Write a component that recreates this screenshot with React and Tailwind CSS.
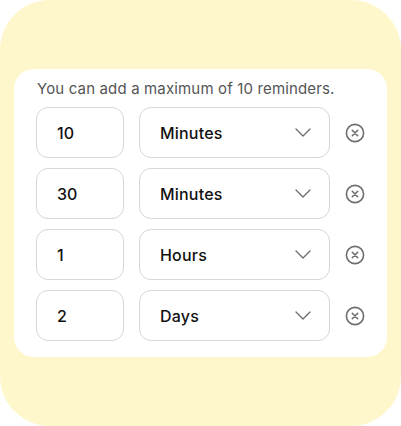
import React from "react";

const reminders = [
  { amount: "10", unit: "Minutes" },
  { amount: "30", unit: "Minutes" },
  { amount: "1", unit: "Hours" },
  { amount: "2", unit: "Days" },
];

function Chevron() {
  return (
    <svg width="16" height="9" viewBox="0 0 16 9" fill="none">
      <path d="M1 1l7 7 7-7" stroke="#6b6b6b" strokeWidth="1.3" strokeLinecap="round" strokeLinejoin="round" />
    </svg>
  );
}

function RemoveIcon() {
  return (
    <svg width="20" height="20" viewBox="0 0 20 20" fill="none">
      <circle cx="10" cy="10" r="8.6" stroke="#6e6e6e" strokeWidth="1.6" />
      <path d="M7.3 7.3l5.4 5.4M12.7 7.3l-5.4 5.4" stroke="#6e6e6e" strokeWidth="1.6" strokeLinecap="round" />
    </svg>
  );
}

function ReminderRow({ amount, unit }) {
  return (
    <div className="flex items-center">
      <div className="w-[88px] h-[51px] rounded-[12px] border border-[#d6d6d6] flex items-center pl-[20px] text-[16px] font-medium text-[#111]">
        {amount}
      </div>
      <div className="ml-[15px] w-[191px] h-[51px] rounded-[12px] border border-[#d6d6d6] flex items-center justify-between pl-[20px] pr-[18px] text-[16px] font-medium text-[#111] tracking-[0.2px]">
        <span>{unit}</span>
        <Chevron />
      </div>
      <div className="ml-[15px] flex items-center">
        <RemoveIcon />
      </div>
    </div>
  );
}

export default function App() {
  return (
    <div className="w-[401px] h-[426px] bg-white" style={{ fontFamily: "Inter, 'Noto Sans', sans-serif" }}>
      <div className="w-[401px] h-[426px] bg-[#fff7cc] rounded-[50px] pt-[69px] pl-[14px]">
        <div className="w-[373px] h-[288px] bg-white rounded-[20px] pt-[11px] pl-[22px]">
          <p className="text-[15px] text-[#555] leading-[18px] pl-[1px] tracking-[0.15px]">
            You can add a maximum of 10 reminders.
          </p>
          <div className="mt-[9px] flex flex-col gap-[10px]">
            {reminders.map((r, i) => (
              <ReminderRow key={i} amount={r.amount} unit={r.unit} />
            ))}
          </div>
        </div>
      </div>
    </div>
  );
}
